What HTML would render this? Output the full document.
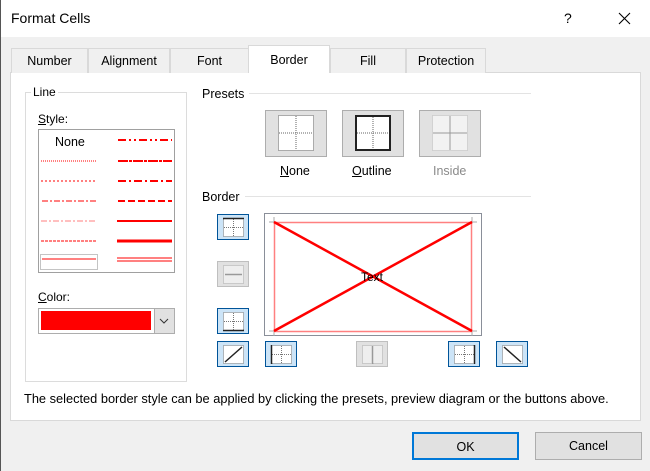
<!DOCTYPE html>
<html><head><style>
*{box-sizing:border-box;margin:0;padding:0}
body{width:650px;height:471px;background:#f0f0f0;font-family:"Liberation Sans",sans-serif;font-size:12px;color:#000;position:relative;overflow:hidden;border-left:1px solid #555}
.a{position:absolute}
.title{left:0;top:0;width:650px;height:37px;background:#fff}
.tab{position:absolute;top:48px;height:25px;border:1px solid #d9d9d9;border-bottom:none;background:#f0f0f0;text-align:center;line-height:24px;font-size:12.5px}
.panel{left:9px;top:72px;width:631px;height:349px;background:#fff;border:1px solid #d9d9d9}
.pb{position:absolute;background:#e1e1e1;border:1px solid #adadad}
.sb{position:absolute;width:32px;height:26px;background:#cce4f7;border:1px solid #005499}
.sb.d{background:#e1e1e1;border-color:#bfbfbf}
.btn{position:absolute;top:432px;height:28px;width:107px;background:#e1e1e1;border:1px solid #adadad;text-align:center;line-height:26px;font-size:12.5px}
u{text-decoration:underline}
</style></head><body>
<div class="a title"></div>
<div class="a" style="left:10px;top:10px;font-size:14px">Format Cells</div>
<div class="a" style="left:563px;top:10px;font-size:14px">?</div>
<svg class="a" style="left:617px;top:12px" width="13" height="13"><path d="M1 1L12 12M12 1L1 12" stroke="#000" stroke-width="1.1"/></svg>

<div class="a panel"></div>
<div class="tab" style="left:10px;width:77px">Number</div>
<div class="tab" style="left:87px;width:82px">Alignment</div>
<div class="tab" style="left:169px;width:79px">Font</div>
<div class="tab" style="left:247px;width:82px;top:45px;height:28px;background:#fff;line-height:28px">Border</div>
<div class="tab" style="left:329px;width:76px">Fill</div>
<div class="tab" style="left:405px;width:80px">Protection</div>

<!-- Line group -->
<div class="a" style="left:24px;top:92px;width:162px;height:290px;border:1px solid #dcdcdc"></div>
<div class="a" style="left:30px;top:85px;background:#fff;padding:0 2px">Line</div>
<div class="a" style="left:37px;top:112px"><u>S</u>tyle:</div>
<div class="a" style="left:37px;top:129px;width:137px;height:144px;border:1px solid #a0a0a0"></div>
<div class="a" style="left:54px;top:135px;font-size:12.5px">None</div>
<svg class="a" style="left:38px;top:130px" width="135" height="142">
<g stroke="red">
<line x1="2" y1="31" x2="57" y2="31" stroke-dasharray="1 1"/>
<line x1="2" y1="51" x2="57" y2="51" stroke-dasharray="2 2"/>
<line x1="3" y1="71" x2="57" y2="71" stroke-dasharray="6 2 2 2"/>
<line x1="2" y1="91" x2="57" y2="91" stroke-dasharray="6 2 2 2" stroke-opacity=".5"/>
<line x1="2" y1="111" x2="57" y2="111" stroke-dasharray="3 1"/>
<line x1="3" y1="129" x2="57" y2="129"/>
<line x1="79" y1="10" x2="133" y2="10" stroke-width="2" stroke-dasharray="8 3 2 3 2 3"/>
<line x1="79" y1="31" x2="133" y2="31" stroke-width="2" stroke-dasharray="10 1 3 1"/>
<line x1="79" y1="51" x2="133" y2="51" stroke-width="2" stroke-dasharray="8 3 2 3"/>
<line x1="79" y1="71" x2="133" y2="71" stroke-width="2" stroke-dasharray="7 3"/>
<line x1="78" y1="91" x2="133" y2="91" stroke-width="2"/>
<line x1="78" y1="111" x2="133" y2="111" stroke-width="3"/>
<line x1="78" y1="128" x2="133" y2="128"/><line x1="78" y1="131" x2="133" y2="131"/>
</g>
<rect x="1.5" y="124.5" width="57" height="15" fill="none" stroke="#888" stroke-dasharray="1 1"/>
</svg>
<div class="a" style="left:37px;top:290px"><u>C</u>olor:</div>
<div class="a" style="left:37px;top:308px;width:137px;height:26px;border:1px solid #adadad;background:#fff"></div>
<div class="a" style="left:40px;top:311px;width:110px;height:19px;background:red"></div>
<div class="a" style="left:153px;top:309px;width:20px;height:24px;background:#e1e1e1;border-left:1px solid #adadad"></div>
<svg class="a" style="left:158px;top:318px" width="10" height="6"><path d="M1 1L5 5L9 1" fill="none" stroke="#333"/></svg>

<!-- Presets -->
<div class="a" style="left:201px;top:87px;font-size:12.5px">Presets</div>
<div class="a" style="left:248px;top:93px;width:282px;height:1px;background:#e3e3e3"></div>
<div class="pb" style="left:264px;top:110px;width:62px;height:47px"></div>
<div class="pb" style="left:341px;top:110px;width:62px;height:47px"></div>
<div class="pb" style="left:418px;top:110px;width:62px;height:47px"></div>
<svg class="a" style="left:277px;top:115px" width="36" height="36"><g fill="#fff" stroke="#666" stroke-dasharray="1 1"><rect x=".5" y=".5" width="35" height="35"/></g><path d="M18 1V35M1 18H35" stroke="#666" stroke-dasharray="1 1"/></svg>
<svg class="a" style="left:354px;top:115px" width="36" height="36"><rect x="1" y="1" width="34" height="34" fill="#fff" stroke="#222" stroke-width="2"/><path d="M18 2V34M2 18H34" stroke="#666" stroke-dasharray="1 1"/></svg>
<svg class="a" style="left:431px;top:115px" width="36" height="36"><rect x=".5" y=".5" width="35" height="35" fill="#f2f2f2" stroke="#bbb" stroke-dasharray="1 1"/><path d="M18 1V35M1 18H35" stroke="#999"/></svg>
<div class="a" style="left:279px;top:164px;font-size:12.5px"><u>N</u>one</div>
<div class="a" style="left:351px;top:164px;font-size:12.5px"><u>O</u>utline</div>
<div class="a" style="left:432px;top:164px;font-size:12.5px;color:#8a8a8a">Inside</div>

<div class="a" style="left:201px;top:190px;font-size:12.5px">Border</div>
<div class="a" style="left:244px;top:196px;width:286px;height:1px;background:#e3e3e3"></div>

<!-- side buttons -->
<div class="sb" style="left:216px;top:214px"></div>
<div class="sb d" style="left:216px;top:261px"></div>
<div class="sb" style="left:216px;top:308px"></div>
<div class="sb" style="left:216px;top:341px"></div>
<div class="sb" style="left:264px;top:341px"></div>
<div class="sb d" style="left:355px;top:341px"></div>
<div class="sb" style="left:447px;top:341px"></div>
<div class="sb" style="left:495px;top:341px"></div>
<svg class="a" style="left:0;top:0" width="650" height="471">
<g fill="#fff" stroke="#777" stroke-dasharray="1 1">
<rect x="222.5" y="218.5" width="20" height="18"/><rect x="222.5" y="265.5" width="20" height="18" fill="#eee" stroke="#aaa"/><rect x="222.5" y="312.5" width="20" height="18"/>
<rect x="222.5" y="345.5" width="20" height="18"/><rect x="270.5" y="345.5" width="20" height="18"/><rect x="361.5" y="345.5" width="20" height="18" fill="#eee" stroke="#aaa"/><rect x="453.5" y="345.5" width="20" height="18"/><rect x="501.5" y="345.5" width="20" height="18"/>
<path d="M232.5 219V237M223 227.5H242M232.5 313V331M223 321.5H242M280.5 346V364M271 354.5H290M463.5 346V364M454 354.5H473"/>
</g>
<g stroke="#222" stroke-width="1.5">
<path d="M222 218.5H243M222 330.5H243M270.5 345V364M473.5 345V364M224 362L241 347M503 347L520 362"/>
</g>
<path d="M224 274.5H241M371.5 346V364" stroke="#999" stroke-width="1.5"/>
<!-- preview -->
<rect x="263.5" y="213.5" width="217" height="122" fill="#fff" stroke="#8a8f99"/>
<path d="M273 217V223M268 222H274M471 217V223M470 222H476M273 330V336M268 331H274M471 330V336M470 331H476" stroke="#aaa"/>
<rect x="273.5" y="222.5" width="197" height="109" fill="none" stroke="#ff8080" stroke-width="1.5"/>
<path d="M273 222L471 331M273 331L471 222" stroke="red" stroke-width="2.5"/>
<text x="360" y="281" font-family="Liberation Sans" font-size="12">Text</text>
</svg>

<div class="a" style="left:23px;top:391px;font-size:12.8px">The selected border style can be applied by clicking the presets, preview diagram or the buttons above.</div>
<div class="btn" style="left:411px;border:2px solid #0078d7">OK</div>
<div class="btn" style="left:534px">Cancel</div>
</body></html>
